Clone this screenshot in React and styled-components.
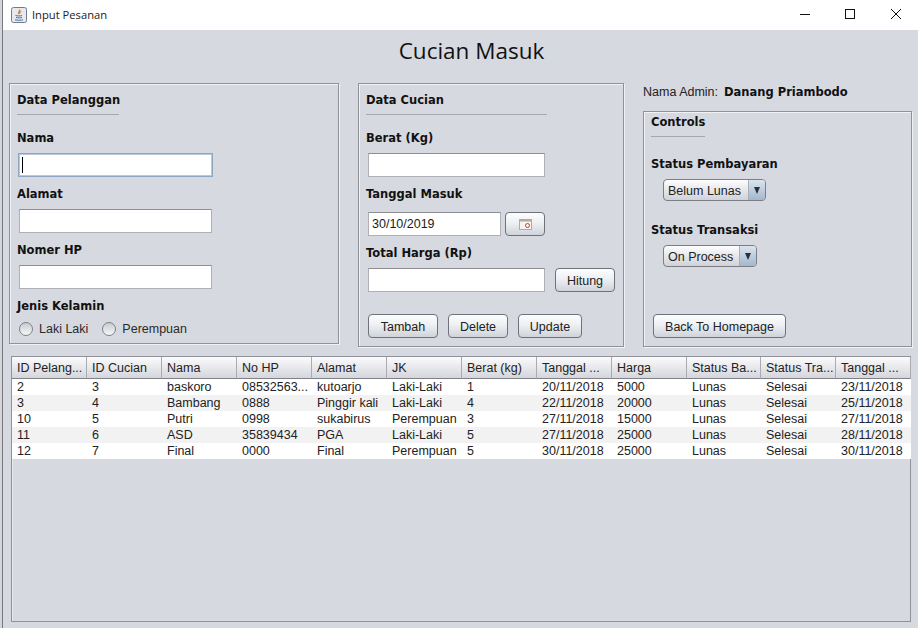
import React from 'react';
import styled, { createGlobalStyle } from 'styled-components';

const rows = [
  ['2', '3', 'baskoro', '08532563...', 'kutoarjo', 'Laki-Laki', '1', '20/11/2018', '5000', 'Lunas', 'Selesai', '23/11/2018'],
  ['3', '4', 'Bambang', '0888', 'Pinggir kali', 'Laki-Laki', '4', '22/11/2018', '20000', 'Lunas', 'Selesai', '25/11/2018'],
  ['10', '5', 'Putri', '0998', 'sukabirus', 'Perempuan', '3', '27/11/2018', '15000', 'Lunas', 'Selesai', '27/11/2018'],
  ['11', '6', 'ASD', '35839434', 'PGA', 'Laki-Laki', '5', '27/11/2018', '25000', 'Lunas', 'Selesai', '28/11/2018'],
  ['12', '7', 'Final', '0000', 'Final', 'Perempuan', '5', '30/11/2018', '25000', 'Lunas', 'Selesai', '30/11/2018'],
];

const headers = ['ID Pelang...', 'ID Cucian', 'Nama', 'No HP', 'Alamat', 'JK', 'Berat (kg)', 'Tanggal ...', 'Harga', 'Status Ba...', 'Status Tra...', 'Tanggal ...'];

const GlobalStyle = createGlobalStyle`
  html, body {
    margin: 0;
    padding: 0;
    background: #d6d9e0;
  }
  body {
    font-family: "Liberation Sans", Arial, sans-serif;
    font-size: 12.5px;
    color: #1c1c1c;
  }
`;

const Desktop = styled.div`
  width: 918px;
  height: 628px;
  box-sizing: border-box;
  padding-left: 2px;
  overflow: hidden;
  background: #d3d5da;
`;

const Window = styled.div`
  height: 100%;
  display: flex;
  flex-direction: column;
  border-left: 1px solid #77787c;
  background: #d6d9e0;
`;

const TitleBar = styled.div`
  height: 30px;
  flex: none;
  display: flex;
  align-items: center;
  background: #fff;
  padding-left: 8px;
`;

const TitleText = styled.span`
  margin-left: 5px;
  padding-bottom: 1px;
  font-family: "Open Sans", sans-serif;
  font-size: 11.2px;
  color: #222;
`;

const WindowControls = styled.div`
  margin-left: auto;
  margin-right: -1px;
  align-self: flex-start;
  display: flex;
`;

const ControlButton = styled.div`
  width: 46px;
  height: 28px;
  display: flex;
  align-items: center;
  justify-content: center;
`;

const Body = styled.div`
  flex: 1;
  display: flex;
  flex-direction: column;
  padding: 0 6px 6px 6px;
  min-height: 0;
`;

const Heading = styled.h1`
  margin: 5px 0 0;
  height: 32px;
  line-height: 32px;
  padding-left: 22px;
  text-align: center;
  font-family: "Open Sans", sans-serif;
  font-weight: 400;
  font-size: 22.5px;
  color: #111;
`;

const TopRow = styled.div`
  display: flex;
  align-items: flex-start;
  margin-top: 16px;
`;

const Panel = styled.section`
  box-sizing: border-box;
  flex: none;
  width: ${(p) => p.$w}px;
  height: ${(p) => p.$h}px;
  margin-left: ${(p) => p.$ml || 0}px;
  margin-top: ${(p) => p.$mt || 0}px;
  border: 1px solid #8f929b;
  box-shadow: inset 1px 1px 0 #f1f2f5, 1px 1px 0 #f1f2f5;
  padding: ${(p) => p.$pt || 8}px 7px 0;
  display: flex;
  flex-direction: column;
  align-items: flex-start;
`;

const Bold = styled.div`
  font-family: "DejaVu Sans", "Noto Sans", sans-serif;
  font-weight: 700;
  font-size: 11.5px;
  line-height: 16px;
  color: #111;
  white-space: nowrap;
  margin-top: ${(p) => p.$mt || 0}px;
`;

const PanelTitle = styled(Bold)`
  width: ${(p) => p.$line}px;
  padding-bottom: 6px;
  border-bottom: 1px solid #a6a8ae;
`;

const TextField = styled.div`
  box-sizing: border-box;
  width: ${(p) => p.$w}px;
  height: 24px;
  margin-top: ${(p) => p.$mt ?? 7}px;
  margin-left: ${(p) => p.$ml ?? 2}px;
  flex: none;
  background: #fff;
  border: 1px solid ${(p) => (p.$focus ? '#8ea6c2' : '#aeb0b5')};
  border-top-color: ${(p) => (p.$focus ? '#8ea6c2' : '#8c8e93')};
  box-shadow: ${(p) => (p.$focus ? 'inset 0 0 0 1px #b8c9dc' : 'none')};
  display: flex;
  align-items: center;
  padding-left: 3px;
`;

const Caret = styled.span`
  display: block;
  width: 1px;
  height: 16px;
  background: #000;
`;

const RadioRow = styled.div`
  display: flex;
  align-items: center;
  margin: 8px 0 0 2px;
`;

const Radio = styled.span`
  box-sizing: border-box;
  width: 14px;
  height: 14px;
  border-radius: 50%;
  border: 1px solid #7e8085;
  background: linear-gradient(#c9cbd0, #f6f7f8);
  margin-left: ${(p) => p.$ml || 0}px;
`;

const RadioLabel = styled.span`
  margin-left: 6px;
  color: #2a2a2a;
`;

const ButtonRow = styled.div`
  display: flex;
  align-items: center;
  margin: ${(p) => p.$mt ?? 0}px 0 0 ${(p) => p.$ml ?? 2}px;
`;

const Button = styled.button`
  box-sizing: border-box;
  flex: none;
  width: ${(p) => p.$w}px;
  height: 24px;
  margin-left: ${(p) => p.$ml || 0}px;
  padding: 1px 0 0;
  border: 1px solid #6f7278;
  border-radius: 4px;
  background: linear-gradient(#fdfdfe 0%, #eef0f3 45%, #cfd2d9 100%);
  font-family: "Liberation Sans", Arial, sans-serif;
  font-size: 12.5px;
  color: #222;
  display: flex;
  align-items: center;
  justify-content: center;
`;

const RightColumn = styled.div`
  margin-left: 19px;
  width: 269px;
  flex: none;
`;

const AdminLine = styled.div`
  display: flex;
  align-items: baseline;
  height: 16px;
  margin-top: 1px;
  color: #222;
`;

const AdminName = styled(Bold)`
  margin-left: 6px;
`;

const Combo = styled.div`
  box-sizing: border-box;
  width: ${(p) => p.$w}px;
  height: 22px;
  margin: 7px 0 0 12px;
  border: 1px solid #7b7e85;
  border-radius: 4px;
  background: linear-gradient(#fdfdfe, #cfd2d9);
  display: flex;
  align-items: center;
  overflow: hidden;
`;

const ComboText = styled.span`
  flex: 1;
  padding: 1px 0 0 4px;
  color: #222;
  white-space: nowrap;
`;

const ComboArrow = styled.span`
  width: 16px;
  height: 100%;
  flex: none;
  border-left: 1px solid #a9afb9;
  background: linear-gradient(#dbe4ee, #a3b7cc);
  display: flex;
  align-items: center;
  justify-content: center;
`;

const TriangleDown = styled.span`
  width: 0;
  height: 0;
  border-left: 3.5px solid transparent;
  border-right: 3.5px solid transparent;
  border-top: 7px solid #2b2f36;
`;

const TableWrap = styled.div`
  box-sizing: border-box;
  flex: 1;
  margin: 9px 0 0 2px;
  width: 900px;
  border: 1px solid #8f929b;
  box-shadow: inset 1px 0 0 #e6e8ec;
  min-height: 0;
`;

const DataTable = styled.table`
  border-collapse: separate;
  border-spacing: 0;
  table-layout: fixed;
  width: 898px;
`;

const HeadCell = styled.th`
  box-sizing: border-box;
  height: 22px;
  padding: 0 0 0 5px;
  text-align: left;
  font-weight: 400;
  font-size: 12.5px;
  color: #222;
  white-space: nowrap;
  overflow: hidden;
  background: linear-gradient(#fbfbfc, #d4d6dc);
  border-right: 1px solid #a9abb2;
  border-bottom: 1px solid #7f8187;
`;

const Row = styled.tr`
  background: ${(p) => (p.$alt ? '#f2f2f2' : '#fff')};
`;

const Cell = styled.td`
  box-sizing: border-box;
  height: 16px;
  padding: 1px 0 0 5px;
  font-size: 12.5px;
  line-height: 15px;
  color: #222;
  white-space: nowrap;
  overflow: hidden;
`;

const JavaIcon = () => (
  <svg width="16" height="16" viewBox="0 0 16 16">
    <rect x="0.5" y="0.5" width="15" height="15" rx="2" fill="#e6e9ee" stroke="#6d7c8f" />
    <path d="M8.5 2.5c1 1.5-2 2.5-1 4.5M10 4c-1 1-2 1.5-1.2 3" fill="none" stroke="#d9782b" strokeWidth="1.1" />
    <path d="M4.5 8.5c2 .6 5 .6 6.5 0M5 10.5c2 .5 4.5 .5 6 0M4 12.8c2.5.6 6 .6 8 0" fill="none" stroke="#4d6f9c" strokeWidth="1" />
  </svg>
);

const CalendarIcon = () => (
  <svg width="13" height="11" viewBox="0 0 13 11">
    <rect x="0.5" y="0.5" width="12" height="10" fill="#f7f3ee" stroke="#b9a79a" />
    <rect x="0.5" y="0.5" width="12" height="2" fill="#b9a79a" />
    <circle cx="8.5" cy="6.5" r="2" fill="none" stroke="#b3473f" />
  </svg>
);

const App = () => (
  <Desktop>
    <GlobalStyle />
    <Window>
      <TitleBar>
        <JavaIcon />
        <TitleText>Input Pesanan</TitleText>
        <WindowControls>
          <ControlButton>
            <svg width="12" height="10" viewBox="0 0 12 10"><path d="M2 5.5h10" stroke="#111" fill="none" /></svg>
          </ControlButton>
          <ControlButton>
            <svg width="10" height="10" viewBox="0 0 10 10"><rect x="0.5" y="0.5" width="9" height="9" stroke="#111" fill="none" /></svg>
          </ControlButton>
          <ControlButton>
            <svg width="10" height="10" viewBox="0 0 10 10"><path d="M0 0l10 10M10 0L0 10" stroke="#111" fill="none" /></svg>
          </ControlButton>
        </WindowControls>
      </TitleBar>
      <Body>
        <Heading>Cucian Masuk</Heading>
        <TopRow>
          <Panel $w={330} $h={261}>
            <PanelTitle $line={102}>Data Pelanggan</PanelTitle>
            <Bold $mt={15}>Nama</Bold>
            <TextField $w={195} $ml={1} $focus><Caret /></TextField>
            <Bold $mt={9}>Alamat</Bold>
            <TextField $w={193} />
            <Bold $mt={9}>Nomer HP</Bold>
            <TextField $w={193} />
            <Bold $mt={9}>Jenis Kelamin</Bold>
            <RadioRow>
              <Radio />
              <RadioLabel>Laki Laki</RadioLabel>
              <Radio $ml={14} />
              <RadioLabel>Perempuan</RadioLabel>
            </RadioRow>
          </Panel>
          <Panel $w={266} $h={264} $ml={19}>
            <PanelTitle $line={181}>Data Cucian</PanelTitle>
            <Bold $mt={15}>Berat (Kg)</Bold>
            <TextField $w={177} />
            <Bold $mt={9}>Tanggal Masuk</Bold>
            <ButtonRow $mt={10}>
              <TextField $w={133} $mt={0} $ml={0}>30/10/2019</TextField>
              <Button $w={40} $ml={4}><CalendarIcon /></Button>
            </ButtonRow>
            <Bold $mt={9}>Total Harga (Rp)</Bold>
            <ButtonRow $mt={7}>
              <TextField $w={177} $mt={0} $ml={0} />
              <Button $w={60} $ml={10}>Hitung</Button>
            </ButtonRow>
            <ButtonRow $mt={22}>
              <Button $w={70}>Tambah</Button>
              <Button $w={60} $ml={10}>Delete</Button>
              <Button $w={64} $ml={10}>Update</Button>
            </ButtonRow>
          </Panel>
          <RightColumn>
            <AdminLine>
              Nama Admin:
              <AdminName>Danang Priambodo</AdminName>
            </AdminLine>
            <Panel $w={269} $h={236} $pt={2} $mt={11}>
              <PanelTitle $line={54}>Controls</PanelTitle>
              <Bold $mt={19}>Status Pembayaran</Bold>
              <Combo $w={103}>
                <ComboText>Belum Lunas</ComboText>
                <ComboArrow><TriangleDown /></ComboArrow>
              </Combo>
              <Bold $mt={21}>Status Transaksi</Bold>
              <Combo $w={94}>
                <ComboText>On Process</ComboText>
                <ComboArrow><TriangleDown /></ComboArrow>
              </Combo>
              <ButtonRow $mt={47}>
                <Button $w={133}>Back To Homepage</Button>
              </ButtonRow>
            </Panel>
          </RightColumn>
        </TopRow>
        <TableWrap>
          <DataTable>
            <colgroup>
              {headers.map((h, i) => (
                <col key={i} width={i === 9 ? 74 : 75} />
              ))}
            </colgroup>
            <thead>
              <tr>
                {headers.map((h, i) => (
                  <HeadCell key={i}>{h}</HeadCell>
                ))}
              </tr>
            </thead>
            <tbody>
              {rows.map((row, i) => (
                <Row key={i} $alt={i % 2 === 1}>
                  {row.map((c, j) => (
                    <Cell key={j}>{c}</Cell>
                  ))}
                </Row>
              ))}
            </tbody>
          </DataTable>
        </TableWrap>
      </Body>
    </Window>
  </Desktop>
);

export default App;
